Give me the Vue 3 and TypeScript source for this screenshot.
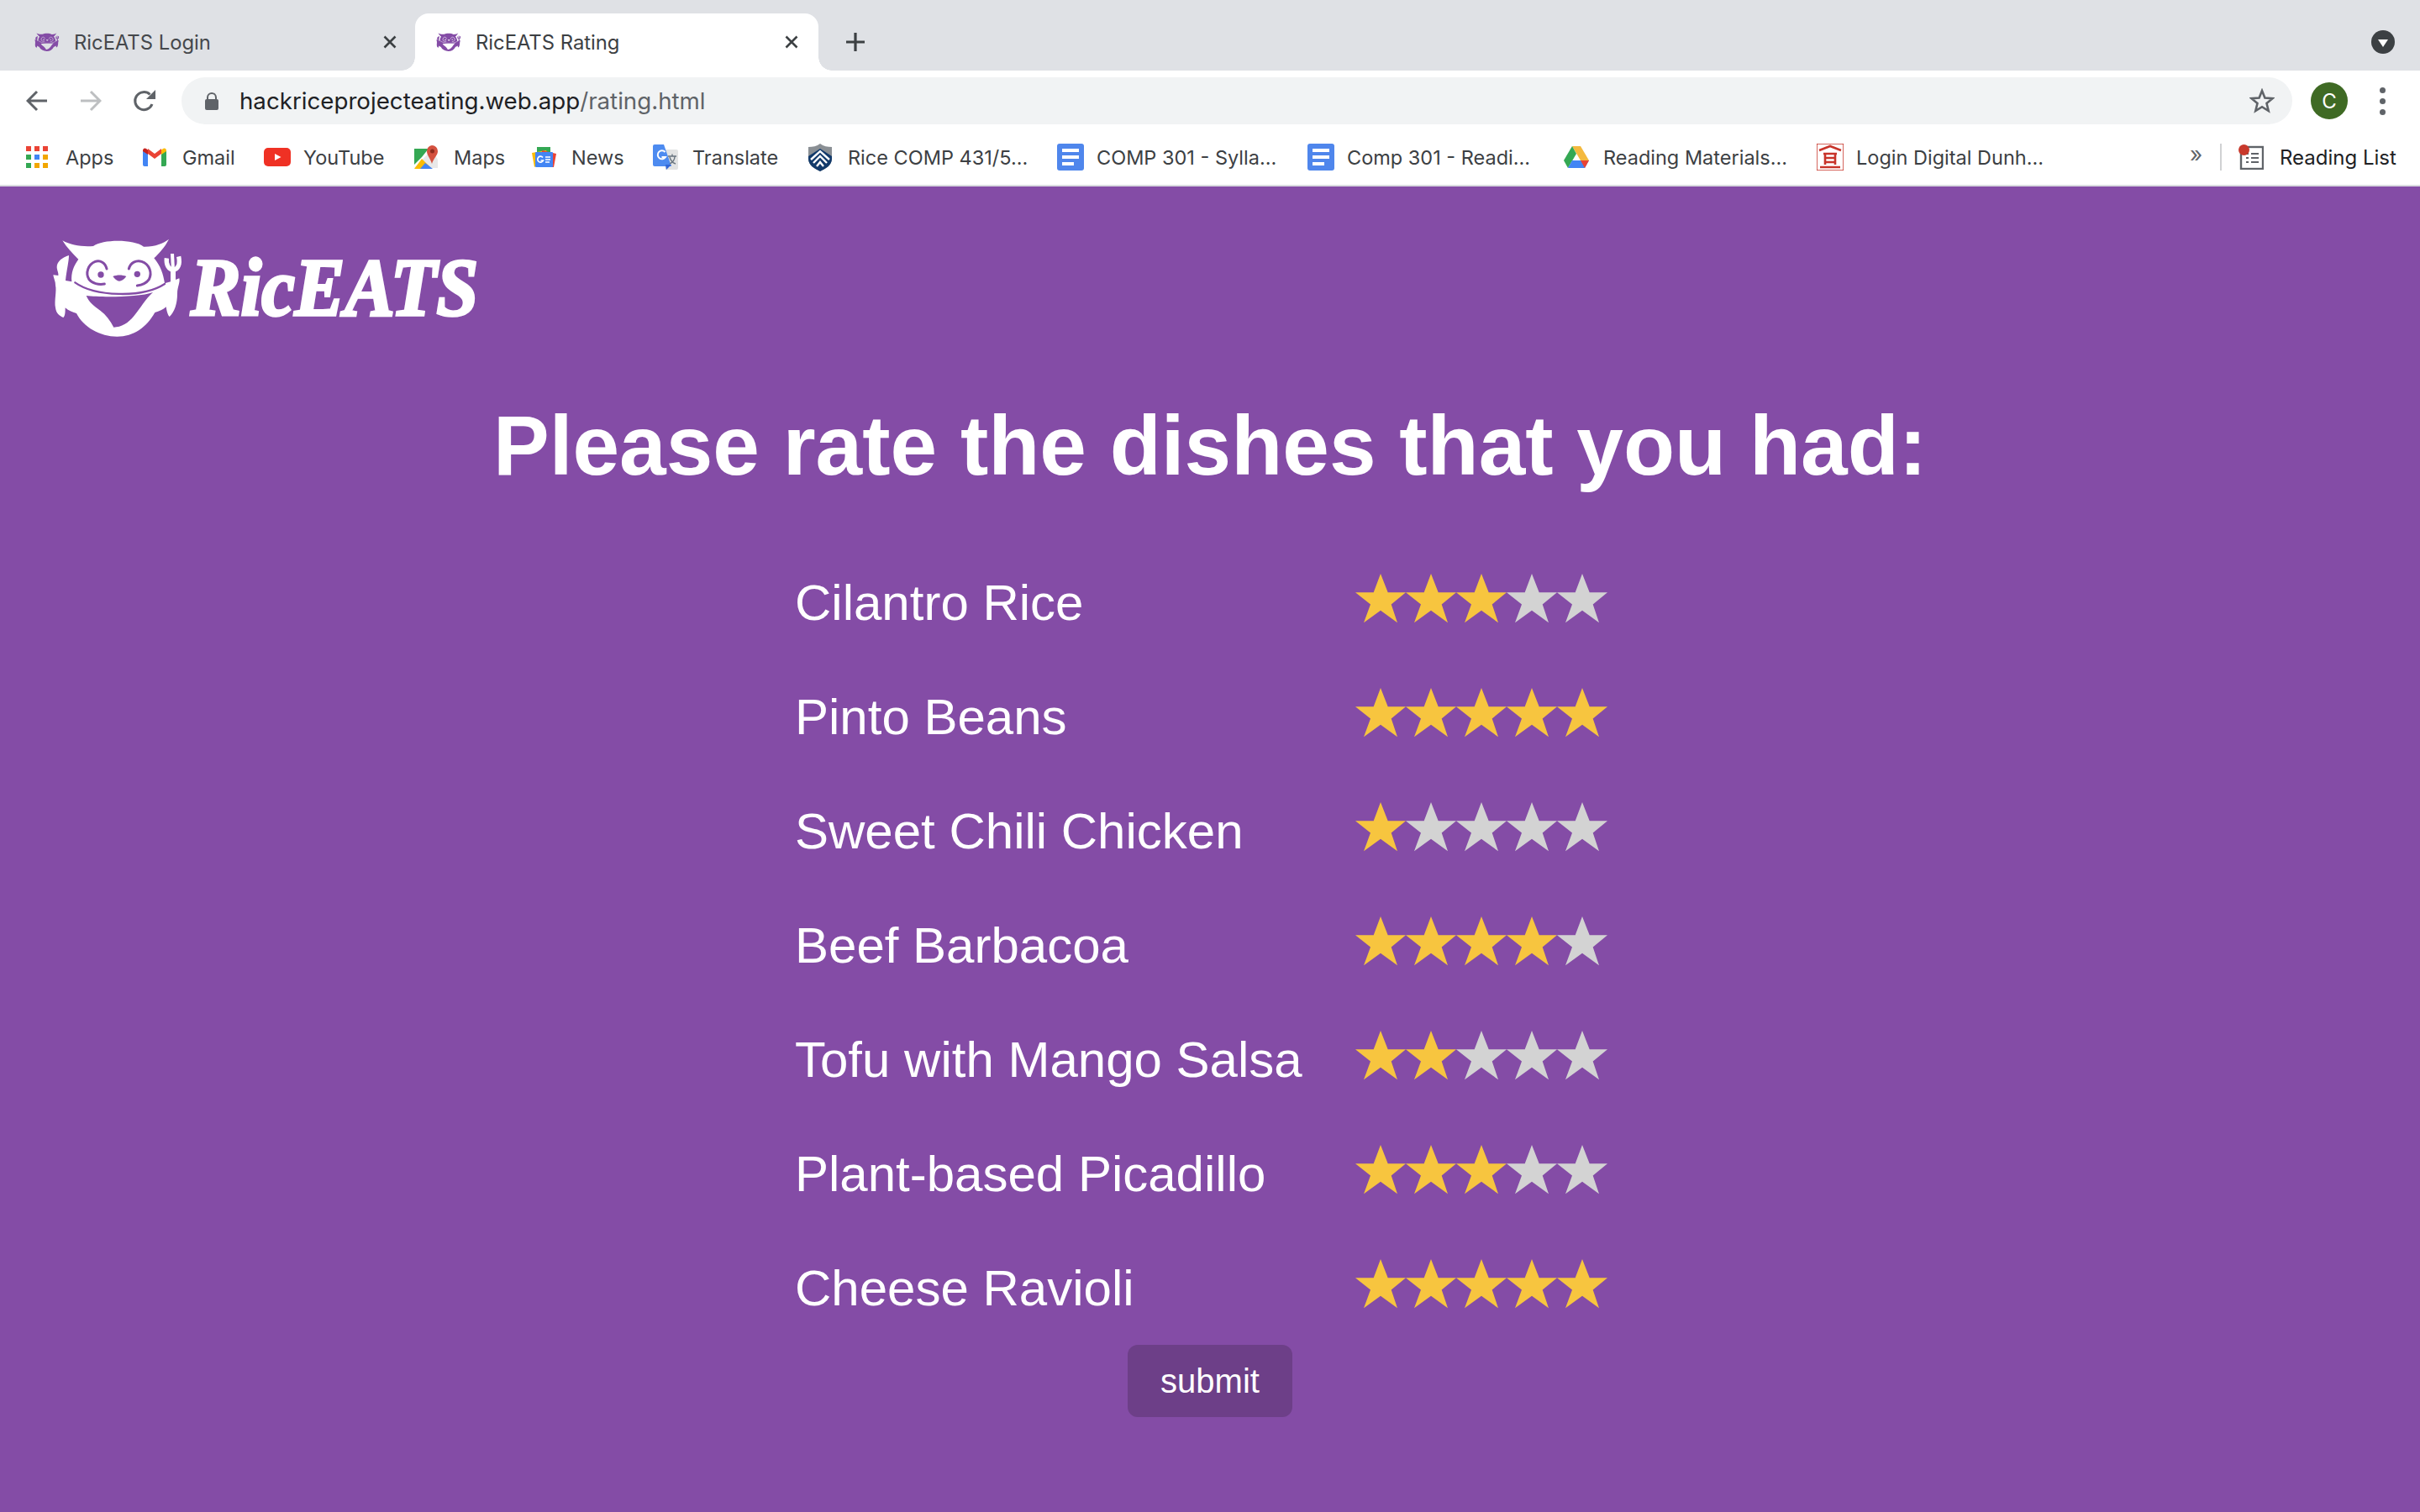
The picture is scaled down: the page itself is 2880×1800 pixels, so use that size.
<script setup lang="ts">
interface Bookmark { label: string; icon: string; width: number }
interface Dish { name: string; rating: number }

const bookmarks: Bookmark[] = [
  { label: 'Apps', icon: 'apps', width: 139 },
  { label: 'Gmail', icon: 'gmail', width: 144 },
  { label: 'YouTube', icon: 'youtube', width: 179 },
  { label: 'Maps', icon: 'maps', width: 140 },
  { label: 'News', icon: 'news', width: 144 },
  { label: 'Translate', icon: 'translate', width: 185 },
  { label: 'Rice COMP 431/5...', icon: 'rice', width: 296 },
  { label: 'COMP 301 - Sylla...', icon: 'doc', width: 298 },
  { label: 'Comp 301 - Readi...', icon: 'doc', width: 305 },
  { label: 'Reading Materials...', icon: 'drive', width: 301 },
  { label: 'Login Digital Dunh...', icon: 'seal', width: 400 },
]

const dishes: Dish[] = [
  { name: 'Cilantro Rice', rating: 3 },
  { name: 'Pinto Beans', rating: 5 },
  { name: 'Sweet Chili Chicken', rating: 1 },
  { name: 'Beef Barbacoa', rating: 4 },
  { name: 'Tofu with Mango Salsa', rating: 2 },
  { name: 'Plant-based Picadillo', rating: 3 },
  { name: 'Cheese Ravioli', rating: 5 },
]

const starPoints = '30,0 38.7,22.3 60,22.3 42.7,36.5 50,58.3 30,43.7 10,58.3 18,36.5 0,22.3 21.7,22.3'
</script>

<template>
  <div class="window">
    <svg class="defs" width="0" height="0">
      <defs>
        <symbol id="mascot" viewBox="0 0 510 384" preserveAspectRatio="none">
          <path class="m-body" d="M55,25 C85,42 125,48 165,45 C200,20 310,20 345,47 C385,48 415,35 435,20 C420,50 400,70 382,88 C405,115 415,145 420,178 L441,172 L441,130 L459,130 L459,165 L472,160 C476,175 465,190 465,215 C465,250 455,280 437,297 C430,290 427,275 425,262 C415,272 400,278 385,282 C355,335 310,368 250,368 C190,368 130,335 105,285 C90,280 75,275 65,265 C65,280 65,295 58,300 C45,295 32,285 30,265 C25,240 35,205 30,185 C30,170 25,165 22,148 L40,150 C42,142 35,130 35,120 C35,100 55,85 78,78 C78,100 70,130 66,168 L88,172 C85,140 95,115 112,92 C90,70 70,50 55,25Z" />
          <path class="m-fork" d="M427,88 C424,112 435,128 450,130 C468,128 476,110 470,82" />
          <path class="m-tine" d="M447,72 L450,130" />
          <path class="m-hole" d="M140,222 C190,228 330,228 378,210 C350,235 335,265 310,295 C290,320 265,335 238,335 C225,310 210,290 190,275 C165,258 150,245 140,222Z" />
          <path class="m-line" d="M100,175 C170,225 340,232 420,180" />
          <path class="m-ring" d="M213,126 C208,104 190,94 172,100 C146,110 136,142 150,164 C160,178 185,184 205,180" />
          <path class="m-ring" d="M292,126 C298,104 318,94 338,100 C366,110 376,140 364,164 C354,178 340,184 322,186" />
          <circle class="m-hole" cx="192" cy="147" r="11" />
          <circle class="m-hole" cx="322" cy="145" r="11" />
          <path class="m-hole" d="M235,153 C250,147 268,147 283,153 C275,165 265,170 258,170 C250,170 242,162 235,153Z" />
        </symbol>
      </defs>
    </svg>

    <header class="chrome">
      <div class="tabstrip">
        <div class="tab tab-idle">
          <svg class="favicon"><use href="#mascot" /></svg>
          <span class="tab-title">RicEATS Login</span>
          <svg class="tab-close" viewBox="0 0 16 16"><path d="M1.5 1.5 L14.5 14.5 M14.5 1.5 L1.5 14.5" /></svg>
        </div>
        <div class="tab tab-active">
          <svg class="favicon"><use href="#mascot" /></svg>
          <span class="tab-title">RicEATS Rating</span>
          <svg class="tab-close" viewBox="0 0 16 16"><path d="M1.5 1.5 L14.5 14.5 M14.5 1.5 L1.5 14.5" /></svg>
        </div>
        <svg class="new-tab" viewBox="0 0 24 24"><path d="M12 1 V23 M1 12 H23" /></svg>
        <div class="tab-search"><svg viewBox="0 0 28 28"><circle cx="14" cy="14" r="14" fill="#3c4043" /><path d="M8 11 H20 L14 20Z" fill="#fff" /></svg></div>
      </div>

      <div class="toolbar">
        <svg class="nav nav-back" viewBox="0 0 26 26"><path d="M25 13 H2.5 M13 2 L2 13 L13 24" /></svg>
        <svg class="nav nav-fwd" viewBox="0 0 26 26"><path d="M1 13 H23.5 M13 2 L24 13 L13 24" /></svg>
        <svg class="nav nav-reload" viewBox="0 0 28 28"><path d="M23 18 A10.5 10.5 0 1 1 20.5 6.5" /><path class="solid" d="M27 1 V12 H16Z" /></svg>
        <div class="omnibox">
          <svg class="lock" viewBox="0 0 16 21"><path d="M3 9 V6 A5 5 0 0 1 13 6 V9" fill="none" stroke="#5f6368" stroke-width="2" /><rect y="8" width="16" height="13" rx="2" fill="#5f6368" /></svg>
          <span class="url"><span class="url-host">hackriceprojecteating.web.app</span><span class="url-path">/rating.html</span></span>
          <svg class="bookmark-star" viewBox="0 0 30 30"><polygon points="15,3 18.4,11.5 27.5,12.2 20.5,18 22.7,27 15,22.2 7.3,27 9.5,18 2.5,12.2 11.6,11.5" /></svg>
        </div>
        <div class="avatar">C</div>
        <div class="menu"><i></i><i></i><i></i></div>
      </div>

      <div class="bookmarks">
        <div class="items">
          <div v-for="b in bookmarks" :key="b.label" class="bm" :style="{ width: b.width + 'px' }">
            <span class="bm-icon">
              <svg v-if="b.icon === 'apps'" width="26" height="26" viewBox="0 0 26 26">
                <rect x="0" y="0" width="6" height="6" fill="#ea4335" /><rect x="10" y="0" width="6" height="6" fill="#ea4335" /><rect x="20" y="0" width="6" height="6" fill="#ea4335" />
                <rect x="0" y="10" width="6" height="6" fill="#34a853" /><rect x="10" y="10" width="6" height="6" fill="#4285f4" /><rect x="20" y="10" width="6" height="6" fill="#f2a600" />
                <rect x="0" y="20" width="6" height="6" fill="#34a853" /><rect x="10" y="20" width="6" height="6" fill="#f2a600" /><rect x="20" y="20" width="6" height="6" fill="#f2a600" />
              </svg>
              <svg v-else-if="b.icon === 'gmail'" width="28" height="22" viewBox="0 0 28 22">
                <path d="M0 3 L6 7 V22 H2 A2 2 0 0 1 0 20Z" fill="#4285f4" />
                <path d="M22 7 L28 3 V20 A2 2 0 0 1 26 22 H22Z" fill="#34a853" />
                <path d="M6 7 L14 13 L22 7 V1 L14 7 L6 1Z" fill="#ea4335" />
                <path d="M0 3 A2.5 2.5 0 0 1 4 1 L6 2.5 V8 L0 4Z" fill="#c5221f" />
                <path d="M22 2.5 L24 1 A2.5 2.5 0 0 1 28 3 V4 L22 8Z" fill="#fbbc04" />
              </svg>
              <svg v-else-if="b.icon === 'youtube'" width="32" height="22" viewBox="0 0 32 22">
                <rect width="32" height="22" rx="5" fill="#ef3124" /><path d="M13 7 L20.5 11 L13 15Z" fill="#fff" />
              </svg>
              <svg v-else-if="b.icon === 'maps'" width="28" height="28" viewBox="0 0 28 28">
                <path d="M0 4 H17 L9 14 L0 23Z" fill="#34a853" />
                <path d="M0 27 L21 5 L28 17 V27Z" fill="#e8e8e8" />
                <path d="M0 28 L9 16 L21 28Z" fill="#fbbc04" />
                <path d="M7 28 L13 21 L22 28Z" fill="#4285f4" />
                <path d="M21 0 A7 7 0 0 1 28 7 C28 12 23 15 21 22 C19 15 15 12 15 7 A7 7 0 0 1 21 0Z" fill="#d4513f" />
                <circle cx="21.5" cy="7" r="2.5" fill="#8e2b1d" />
              </svg>
              <svg v-else-if="b.icon === 'news'" width="30" height="24" viewBox="0 0 30 24">
                <path d="M6 0 H22 V6 H6Z" fill="#34a853" />
                <path d="M0 7 L17 4 L20 12 L3 24Z" fill="#fbbc04" />
                <path d="M12 4 L29 8 L26 24 H12Z" fill="#ea4335" />
                <rect x="4" y="6" width="21" height="18" rx="1" fill="#4285f4" />
                <path d="M16 12 H22 M16 15 H22 M16 18 H21" stroke="#fff" stroke-width="1.7" />
                <path d="M13 12.5 A3.5 3.5 0 1 0 13.5 16 H10.5" fill="none" stroke="#fff" stroke-width="1.7" />
              </svg>
              <svg v-else-if="b.icon === 'translate'" width="30" height="30" viewBox="0 0 30 30">
                <path d="M12 6 H28 A2 2 0 0 1 30 8 V28 A2 2 0 0 1 28 30 H15Z" fill="#e2e3e3" />
                <path d="M2 0 H13 L22 26 H2 A2 2 0 0 1 0 24 V2 A2 2 0 0 1 2 0Z" fill="#4d8bf0" />
                <path d="M15 24 H22 L16 30Z" fill="#3367d6" />
                <path d="M14.5 9 A5 5 0 1 0 15 15 H10.5" fill="none" stroke="#fff" stroke-width="2" />
                <path d="M18 14 H28 M23 11.5 V14 M20 23 C24 21 26 17 26 14 M20 15 C21 19 24 22 27 23" fill="none" stroke="#6a7680" stroke-width="1.4" />
              </svg>
              <svg v-else-if="b.icon === 'rice'" width="28" height="33" viewBox="0 0 28 33">
                <path d="M0 4 C5 4 10 3 14 0 C18 3 23 4 28 4 V18 C28 26 20 30 14 33 C8 30 0 26 0 18Z" fill="#8a8f94" />
                <path d="M0 15 L14 6 L28 15 V18 C28 26 20 30 14 33 C8 30 0 26 0 18Z" fill="#123a6b" />
                <path d="M3 19 L14 9 L25 19 M6 23 L14 15 L22 23 M10 27 L14 22 L18 27" fill="none" stroke="#fff" stroke-width="2.4" />
              </svg>
              <svg v-else-if="b.icon === 'doc'" width="32" height="32" viewBox="0 0 32 32">
                <rect width="32" height="32" rx="3" fill="#4f86ec" />
                <rect x="6" y="6" width="20" height="4" fill="#fff" /><rect x="6" y="14" width="20" height="4" fill="#fff" /><rect x="6" y="22" width="14" height="4" fill="#fff" />
              </svg>
              <svg v-else-if="b.icon === 'drive'" width="30" height="26" viewBox="0 0 30 26">
                <path d="M10 0 H20 L30 17 H20Z" fill="#f4b93e" />
                <path d="M10 0 L0 17 L5 26 L15 9Z" fill="#34a853" />
                <path d="M5 26 H25 L30 17 H10 Z" fill="#4285f4" />
                <path d="M20 17 H30 L25 26Z" fill="#ea4335" />
              </svg>
              <svg v-else width="32" height="32" viewBox="0 0 32 32">
                <rect width="32" height="32" rx="1" fill="#fff" stroke="#c8342a" stroke-width="1.5" />
                <path d="M3 8 L16 3 L29 8 M8 12 H24 M10 12 V25 M22 12 V25 M10 17 H22 M10 22 H22 M4 28 H28" fill="none" stroke="#c8342a" stroke-width="2.6" />
              </svg>
            </span>
            <span class="bm-label">{{ b.label }}</span>
          </div>
        </div>
        <span class="sep"></span>
        <div class="reading">
          <svg width="30" height="30" viewBox="0 0 30 30">
            <rect x="3" y="3" width="26" height="26" fill="none" stroke="#5f6368" stroke-width="2.4" />
            <path d="M9 11 H12 M15 11 H24 M9 16 H12 M15 16 H24 M9 21 H12 M15 21 H24" stroke="#5f6368" stroke-width="2.2" />
            <circle cx="6.5" cy="6.5" r="6.5" fill="#c8392c" />
          </svg>
          <span class="reading-label">Reading List</span>
        </div>
      </div>
    </header>

    <main class="page">
      <div class="logo-row">
        <svg class="logo" viewBox="0 0 540 130" width="540" height="130">
          <use href="#mascot" x="0" y="0" width="170" height="128" />
          <text class="logo-text" x="171" y="97" textLength="342" lengthAdjust="spacingAndGlyphs">RicEATS</text>
        </svg>
      </div>

      <h1 class="heading">Please rate the dishes that you had:</h1>

      <div class="ratings">
        <div v-for="d in dishes" :key="d.name" class="row">
          <span class="dish">{{ d.name }}</span>
          <div class="stars">
            <svg v-for="n in 5" :key="n" class="star" viewBox="0 0 60 59" width="60" height="59">
              <polygon :points="starPoints" :fill="n <= d.rating ? '#f7c53f' : '#d3d3d3'" />
            </svg>
          </div>
        </div>
      </div>

      <button class="submit" type="button">submit</button>
    </main>
  </div>
</template>

<style>
html, body { margin: 0; padding: 0; background: #844ca6; }
</style>

<style scoped>
.window { width: 2880px; height: 1800px; display: flex; flex-direction: column; overflow: hidden; }
.defs { position: absolute; }
.m-body { fill: currentColor; }
.m-fork { fill: none; stroke: currentColor; stroke-width: 16; }
.m-tine { fill: none; stroke: currentColor; stroke-width: 12; }
.m-hole { fill: var(--hole, #844ca6); }
.m-line { fill: none; stroke: var(--hole, #844ca6); stroke-width: 7; stroke-linecap: round; }
.m-ring { fill: none; stroke: var(--hole, #844ca6); stroke-width: 9; stroke-linecap: round; }

.chrome { background: #fff; font-family: Inter, "Noto Sans", sans-serif; flex: none; }

.tabstrip { height: 84px; background: #dfe1e5; display: flex; align-items: flex-end; box-sizing: border-box; position: relative; }
.tab { height: 68px; box-sizing: border-box; display: flex; align-items: center; position: relative; }
.tab-idle { width: 494px; padding-left: 40px; --hole: #dfe1e5; color: #844ca6; }
.tab-active { width: 480px; padding-left: 24px; background: #fff; border-radius: 16px 16px 0 0; --hole: #fff; color: #844ca6; }
.tab-active::before, .tab-active::after { content: ""; position: absolute; bottom: 0; width: 16px; height: 16px; }
.tab-active::before { left: -16px; background: radial-gradient(circle at 0 0, transparent 15.5px, #fff 16px); }
.tab-active::after { right: -16px; background: radial-gradient(circle at 100% 0, transparent 15.5px, #fff 16px); }
.favicon { width: 32px; height: 24px; flex: none; }
.tab-title { margin-left: 16px; font-size: 23.8px; color: #45484c; white-space: nowrap; flex: 1; }
.tab-active .tab-title { color: #3c4043; }
.tab-close { width: 16px; height: 16px; flex: none; margin-right: 22px; fill: none; stroke: #3c4043; stroke-width: 2.6; }
.tab-active .tab-close { margin-right: 24px; }
.new-tab { width: 24px; height: 24px; margin: 0 0 22px 32px; fill: none; stroke: #3c4043; stroke-width: 3.2; flex: none; }
.tab-search { margin: 0 30px 20px auto; width: 28px; height: 28px; flex: none; }
.tab-search svg { width: 28px; height: 28px; display: block; }

.toolbar { height: 64px; box-sizing: border-box; padding-top: 8px; display: flex; align-items: center; }
.nav { flex: none; fill: none; stroke: #5f6368; stroke-width: 3; }
.nav-back { width: 26px; height: 26px; margin-left: 31px; }
.nav-fwd { width: 26px; height: 26px; margin-left: 38px; stroke: #bdbfc1; }
.nav-reload { width: 28px; height: 28px; margin-left: 37px; }
.nav-reload .solid { fill: #5f6368; stroke: none; }
.omnibox { width: 2512px; height: 56px; margin-left: 30px; border-radius: 28px; background: #f1f3f4; display: flex; align-items: center; flex: none; box-sizing: border-box; padding-left: 28px; }
.lock { width: 16px; height: 21px; flex: none; }
.url { margin-left: 25px; font-size: 27.7px; white-space: nowrap; flex: 1; }
.url-host { color: #202124; }
.url-path { color: #5f6368; }
.bookmark-star { width: 30px; height: 30px; margin-right: 21px; fill: none; stroke: #5f6368; stroke-width: 2.6; flex: none; }
.avatar { width: 44px; height: 44px; margin-left: 22px; border-radius: 50%; background: #3f6a24; color: #fff; font-size: 24px; display: flex; align-items: center; justify-content: center; flex: none; }
.menu { margin-left: 38px; display: flex; flex-direction: column; gap: 6px; flex: none; }
.menu i { display: block; width: 7px; height: 7px; border-radius: 50%; background: #5f6368; }

.bookmarks { height: 74px; box-sizing: border-box; border-bottom: 2px solid #dadce0; display: flex; align-items: center; padding-top: 6px; padding-left: 31px; background: #fff; }
.items { display: flex; width: 2530px; flex: none; }
.bm { display: flex; align-items: center; flex: none; font-size: 23.5px; color: #3c4043; white-space: nowrap; }
.bm-icon { display: flex; align-items: center; justify-content: flex-start; flex: none; width: 30px; height: 34px; margin-right: 17px; }
.bm-icon svg { flex: none; }
.sep { width: 2px; height: 32px; background: #d0d1d3; flex: none; margin-left: 81px; position: relative; }
.sep::before { content: "»"; position: absolute; left: -36px; top: -3px; font-size: 26px; color: #5f6368; }
.reading { display: flex; align-items: center; margin-left: 20px; flex: none; }
.reading-label { margin-left: 19px; font-size: 24px; color: #202124; white-space: nowrap; }

.page { flex: 1; background: #844ca6; color: #fff; font-family: "Liberation Sans", Arial, sans-serif; display: flex; flex-direction: column; align-items: center; --hole: #844ca6; }
.logo-row { align-self: flex-start; padding: 56px 0 0 56px; height: 130px; }
.logo { display: block; color: #fff; overflow: visible; }
.logo-text { font-family: "Liberation Serif", serif; font-weight: 700; font-style: italic; font-size: 98px; fill: #fff; stroke: #fff; stroke-width: 3.5; }
.heading { margin: 67px 0 0; font-size: 100px; line-height: 110px; font-weight: 700; white-space: nowrap; }
.ratings { margin-top: 59px; width: 988px; display: flex; flex-direction: column; }
.row { height: 136px; display: flex; align-items: center; }
.dish { width: 667px; flex: none; font-size: 60px; white-space: nowrap; position: relative; top: 5px; }
.stars { display: flex; flex: none; }
.star { display: block; }
.submit { margin-top: 5px; width: 196px; height: 86px; border: 0; border-radius: 12px; background: #6d3f88; color: #fff; font-family: "Liberation Sans", Arial, sans-serif; font-size: 40px; padding: 0; }
</style>
